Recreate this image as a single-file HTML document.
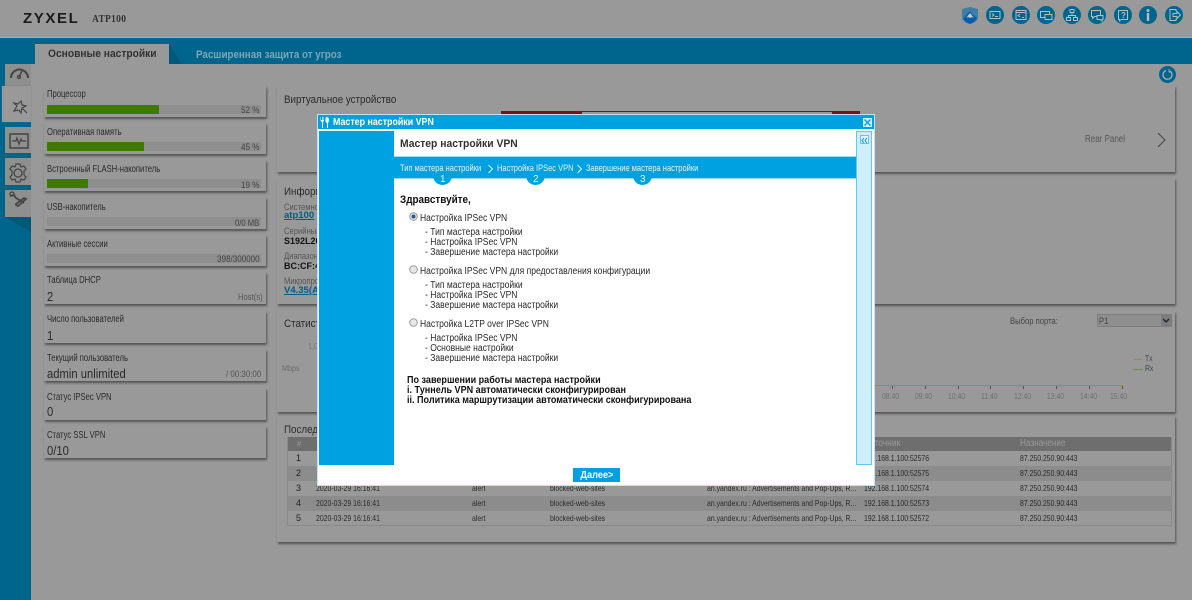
<!DOCTYPE html>
<html><head><meta charset="utf-8"><style>
html,body{margin:0;padding:0}
body{width:1192px;height:600px;position:relative;overflow:hidden;background:#999;font-family:"Liberation Sans",sans-serif;font-size:10px;color:#2a2a2a}
.a,.t,.c{position:absolute}
.t{white-space:nowrap;line-height:12px;transform:scaleX(.85);transform-origin:0 50%}
.l{font-size:10px;transform:scaleX(.765)}
.v{font-size:9.5px;color:#444}
.b{font-size:12.5px;line-height:14px;transform:scaleX(.9)}
.d{font-size:8.5px;transform:scaleX(.81)}
.w{font-size:8px;color:#6f6f6f;top:391px}
.q{font-size:10px;font-weight:bold;color:#111;transform:scaleX(.905)}
.st{font-size:9.5px;color:#e2f5fd;transform:scaleX(.79);top:163px}
.c{left:44px;width:222px;background:#999;box-shadow:1px 2px 2px #555;}
.p{position:absolute;left:277px;width:898px;background:#999;box-shadow:1px 2px 2px #555}
.bar{position:absolute;left:47px;width:214px;height:9px;background:#8e8e8e}
.bar i{display:block;height:9px;background:#3f7a00}
.s{position:absolute;left:5px;width:26px;background:#8f8f8f}
.h{font-size:11px;line-height:14px;color:#2a2a2a;transform:scaleX(.89)}
.ic{position:absolute;top:6px;width:18px;height:18px;border-radius:50%;background:#00658c}
.r{position:absolute;left:288px;width:884px;height:15px}
.m{color:#222;font-size:9px;left:296px;transform:none}
.i{font-size:9px;color:#555;left:284px}
.k{font-size:9px;font-weight:bold;color:#111;left:284px;transform:none}
.n{font-size:10px;transform:scaleX(.855)}
</style></head><body>
<div class="a" style="left:0;top:37px;width:1192px;height:1px;background:#b0aca6"></div>
<div class="a" style="left:0;top:38px;width:1192px;height:26px;background:#00658c"></div>
<div class="a" style="left:0;top:38px;width:31px;height:562px;background:#00658c"></div>
<div class="t" style="left:23px;top:11px;font-size:15px;line-height:16px;font-weight:bold;letter-spacing:1.6px;color:#1a1a1a;transform:none">ZYXEL</div>
<div class="t" style="left:92px;top:14px;font:bold 10px/12px 'Liberation Serif',serif;color:#333;letter-spacing:.3px;transform:scaleX(.95)">ATP100</div>
<!-- top icons -->
<svg class="a" style="left:961px;top:6px" width="18" height="19" viewBox="0 0 18 19"><path d="M1 3L9 1l8 2v8c0 4-4 6-8 7-4-1-8-3-8-7z" fill="#3f7fa3"/><path d="M2 13l4-5 3-3 3 4 4 3-3 4-4 2-4-2z" fill="#0a5bb0"/><path d="M5 12l4-5 4 5-2-1-2 1-2-1z" fill="#c8c8c8"/></svg>
<div class="ic" style="left:986px"><svg width="18" height="18" fill="none" stroke="#bbb"><rect x="4" y="5.5" width="10" height="7"/><path d="M6 7.5l2 1.5-2 1.5M9 10.5h3"/></svg></div>
<div class="ic" style="left:1012px"><svg width="18" height="18" fill="none" stroke="#bbb"><rect x="4" y="4.5" width="10" height="9"/><path d="M4 6.5h10M8 8l-2 1.5L8 11M10 11.5h2"/></svg></div>
<div class="ic" style="left:1037px"><svg width="18" height="18" fill="none" stroke="#bbb"><rect x="3.5" y="5.5" width="9" height="6"/><rect x="8" y="8.5" width="7" height="5" fill="#00658c"/></svg></div>
<div class="ic" style="left:1063px"><svg width="18" height="18" fill="none" stroke="#bbb"><rect x="7" y="3.5" width="4" height="3"/><rect x="3.5" y="11.5" width="4" height="3"/><rect x="10.5" y="11.5" width="4" height="3"/><path d="M9 6.5v3M5.5 11.5v-2h7v2"/></svg></div>
<div class="ic" style="left:1088px"><svg width="18" height="18" fill="none" stroke="#bbb"><path d="M3.5 4.5h9v6h-6l-2 2v-2h-1z"/><path d="M9 9.5h6v4h-1v1.5l-2-1.5H9z" fill="#00658c"/></svg></div>
<div class="ic" style="left:1114px"><svg width="18" height="18" fill="none" stroke="#bbb"><path d="M4.5 4.5h9v9h-6l-2 1.5v-1.500h-1z"/><text x="7" y="12" font-size="8" font-weight="bold" fill="#bbb" stroke="none" font-family="Liberation Sans">?</text></svg></div>
<div class="ic" style="left:1139px"><svg width="18" height="18" fill="#bbb"><circle cx="9" cy="4.5" r="1.5"/><rect x="7.8" y="7" width="2.4" height="8"/></svg></div>
<div class="ic" style="left:1165px"><svg width="18" height="18" fill="none" stroke="#bbb"><path d="M11 5.5V3.5H5v11h6v-2"/><path d="M8 7.5h4V5.500l3.500 3.500-3.500 3.500v-2H8z"/></svg></div>
<!-- tabs -->
<div class="a" style="left:35px;top:44px;width:134px;height:20px;background:#999"></div>
<div class="a" style="left:169px;top:44px;width:13px;height:20px;background:#005878;clip-path:polygon(0 0,100% 100%,0 100%)"></div>
<div class="t" style="left:48px;top:48px;font-size:11px;line-height:13px;font-weight:bold;color:#333;transform:scaleX(.93)">Основные настройки</div>
<div class="t" style="left:196px;top:49px;font-size:11px;line-height:13px;font-weight:bold;color:#7da6b8;transform:scaleX(.89)">Расширенная защита от угроз</div>
<!-- side -->
<div class="s" style="top:64px;height:27px"></div>
<div class="a" style="left:2px;top:86px;width:29px;height:36px;background:#999;box-shadow:0 0 1px #777"></div>
<div class="s" style="top:127px;height:26px"></div>
<div class="s" style="top:158px;height:27px"></div>
<div class="s" style="top:190px;height:27px"></div>
<div class="a" style="left:5px;top:217px;width:26px;height:15px;background:#005878;clip-path:polygon(0 0,100% 0,100% 100%)"></div>
<svg class="a" style="left:0;top:60px" width="32" height="170" fill="none" stroke="#444" stroke-width="1.3">
<path d="M11 18a8.5 8.5 0 1 1 17 0" stroke-width="2"/><path d="M19 17l3-6" stroke-width="1.5"/><circle cx="19" cy="17" r="1.5"/>
<path d="M14 43l3 3-3 5 5-1 2 3 1-5 4-2-4-1-1-4-3 3zM22 48l5 5" stroke-width="1.2"/>
<rect x="10" y="74" width="18" height="14" stroke-width="1.5"/><path d="M12 81h4l1-3 2 6 2-5 1 2h4"/>
<circle cx="18" cy="113" r="4"/><path d="M16 104h4l1 3 3-1 2 3-2 2v4l2 2-2 3-3-1-1 3h-4l-1-3-3 1-2-3 2-2v-4l-2-2 2-3 3 1z" stroke-width="1.2"/>
<path d="M10 136l4-1 2 3 8 5M16 144l8-6 2 1-8 7-2-1z" stroke-width="1.8"/><circle cx="12" cy="134" r="2"/></svg>
<!-- left cards -->
<div class="c" style="top:86px;height:31px"></div><div class="bar" style="top:105px"><i style="width:112px"></i></div>
<div class="t l" style="left:47px;top:89px">Процессор</div><div class="t v" style="left:241px;top:105px">52 %</div>
<div class="c" style="top:123px;height:31px"></div><div class="bar" style="top:142px"><i style="width:97px"></i></div>
<div class="t l" style="left:47px;top:127px">Оперативная память</div><div class="t v" style="left:241px;top:142px">45 %</div>
<div class="c" style="top:160px;height:31px"></div><div class="bar" style="top:179px"><i style="width:41px"></i></div>
<div class="t l" style="left:47px;top:164px">Встроенный FLASH-накопитель</div><div class="t v" style="left:241px;top:180px">19 %</div>
<div class="c" style="top:197px;height:32px"></div><div class="bar" style="top:217px"></div>
<div class="t l" style="left:47px;top:202px">USB-накопитель</div><div class="t v" style="left:235px;top:217px;font-size:9px">0/0 MB</div>
<div class="c" style="top:235px;height:31px"></div><div class="bar" style="top:254px"></div>
<div class="t l" style="left:47px;top:239px">Активные сессии</div><div class="t v" style="left:217px;top:254px">398/300000</div>
<div class="c" style="top:272px;height:32px"></div>
<div class="t l" style="left:47px;top:275px">Таблица DHCP</div><div class="t b" style="left:47px;top:290px">2</div><div class="t" style="left:238px;top:291px;color:#555;font-size:9px">Host(s)</div>
<div class="c" style="top:311px;height:32px"></div>
<div class="t l" style="left:47px;top:314px">Число пользователей</div><div class="t b" style="left:47px;top:329px">1</div>
<div class="c" style="top:349px;height:32px"></div>
<div class="t l" style="left:47px;top:353px">Текущий пользователь</div><div class="t b" style="left:47px;top:367px">admin unlimited</div><div class="t" style="left:226px;top:368px;color:#555;font-size:9px;transform:scaleX(.88)">/ 00:30:00</div>
<div class="c" style="top:388px;height:32px"></div>
<div class="t l" style="left:47px;top:392px">Статус IPSec VPN</div><div class="t b" style="left:47px;top:405px">0</div>
<div class="c" style="top:426px;height:32px"></div>
<div class="t l" style="left:47px;top:430px">Статус SSL VPN</div><div class="t b" style="left:47px;top:444px">0/10</div>
<!-- refresh -->
<div class="a" style="left:1159px;top:66px;width:17px;height:17px;border-radius:50%;background:#00658c"><svg width="17" height="17" fill="none" stroke="#aaa" stroke-width="1.3"><path d="M11 5a4.5 4.5 0 1 1-4-.5"/><path d="M10 3v3h2" stroke-width="1"/></svg></div>
<!-- right panels -->
<div class="p" style="top:86px;height:86px"></div>
<div class="t h" style="left:284px;top:93px">Виртуальное устройство</div>
<div class="a" style="left:501px;top:111px;width:359px;height:1px;background:#333"></div>
<div class="a" style="left:501px;top:111px;width:81px;height:3px;background:#6e1616"></div>
<div class="a" style="left:832px;top:111px;width:28px;height:3px;background:#6e1616"></div>
<div class="t" style="left:1085px;top:134px;font-size:10px;color:#555;transform:scaleX(.8)">Rear Panel</div>
<svg class="a" style="left:1156px;top:131px" width="12" height="18" fill="none" stroke="#444"><path d="M2 2l7 7-7 7"/></svg>
<div class="p" style="top:178px;height:126px"></div>
<div class="t h" style="left:284px;top:185px">Информация</div>
<div class="t i" style="top:201px">Системное имя</div>
<div class="t k" style="top:210px;font-size:9.5px;color:#005f85;text-decoration:underline">atp100</div>
<div class="t i" style="top:225px">Серийный номер</div>
<div class="t k" style="top:235px">S192L20</div>
<div class="t i" style="top:250px">Диапазон</div>
<div class="t k" style="top:260px">BC:CF:4F</div>
<div class="t i" style="top:275px">Микропрограмма</div>
<div class="t k" style="top:285px;font-size:9.5px;color:#005f85;text-decoration:underline">V4.35(AB</div>
<div class="p" style="top:311px;height:101px"></div>
<div class="t h" style="left:284px;top:317px">Статистика</div>
<div class="t" style="left:308px;top:340px;font-size:8.5px;color:#777">1,0</div>
<div class="t" style="left:282px;top:362px;font-size:8.5px;color:#6c6c6c">Mbps</div>
<div class="t" style="left:1010px;top:315px;font-size:9px;color:#444">Выбор порта:</div>
<div class="a" style="left:1097px;top:314px;width:75px;height:13px;background:#8f8f8f;border:1px solid #7d7d7d;box-sizing:border-box"></div>
<div class="t" style="left:1099px;top:315px;font-size:9px;color:#444">P1</div>
<div class="a" style="left:1161px;top:315px;width:10px;height:12px;background:#7d7d7d"><svg width="10" height="12" fill="none" stroke="#123" stroke-width="1.3"><path d="M2 4l3 3 3-3"/></svg></div>
<div class="a" style="left:1133px;top:359px;width:10px;height:1px;background:#a08a50"></div><div class="a" style="left:1133px;top:369px;width:10px;height:1px;background:#6e8a50"></div>
<div class="t" style="left:1145px;top:353px;font-size:8px;color:#444">Tx</div><div class="t" style="left:1145px;top:363px;font-size:8px;color:#444">Rx</div>
<div class="a" style="left:875px;top:385px;width:248px;height:1px;background:#a08a40"></div>
<svg class="a" style="left:875px;top:386px" width="250" height="4" stroke="#555"><path d="M17.5 0v3M50.5 0v3M83.5 0v3M115.5 0v3M148.5 0v3M181.5 0v3M214.5 0v3M247.5 0v3"/></svg>
<div class="t w" style="left:882px">08:40</div><div class="t w" style="left:915px">09:40</div><div class="t w" style="left:948px">10:40</div><div class="t w" style="left:981px">11:40</div><div class="t w" style="left:1014px">12:40</div><div class="t w" style="left:1047px">13:40</div><div class="t w" style="left:1080px">14:40</div><div class="t w" style="left:1110px">15:40</div>
<div class="p" style="top:416px;height:126px"></div>
<div class="t h" style="left:284px;top:423px">Последние</div>
<div class="a" style="left:287px;top:437px;width:885px;height:14px;background:#6e6e6e"></div>
<div class="r" style="top:451px;background:#999"></div><div class="r" style="top:466px;background:#8c8c8c"></div><div class="r" style="top:481px;background:#999"></div><div class="r" style="top:496px;background:#8c8c8c"></div><div class="r" style="top:511px;background:#999"></div>
<div class="a" style="left:287px;top:437px;width:885px;height:89px;border:1px solid #8a8a8a;border-top:0;box-sizing:border-box"></div>
<div class="t" style="left:297px;top:438px;color:#999;font-size:9px">#</div>
<div class="t" style="left:864px;top:438px;color:#999;font-size:10px">Источник</div><div class="t" style="left:1020px;top:438px;color:#999;font-size:10px;transform:scaleX(.82)">Назначение</div>
<div class="t m" style="top:452px">1</div><div class="t m" style="top:467px">2</div><div class="t m" style="top:482px">3</div><div class="t m" style="top:497px">4</div><div class="t m" style="top:512px">5</div>
<div class="t d" style="left:864px;top:452px">192.168.1.100:52576</div><div class="t d" style="left:1020px;top:452px">87.250.250.90:443</div>
<div class="t d" style="left:864px;top:467px">192.168.1.100:52575</div><div class="t d" style="left:1020px;top:467px">87.250.250.90:443</div>
<div class="t d" style="left:316px;top:482px">2020-03-29 16:16:41</div><div class="t d" style="left:472px;top:482px">alert</div><div class="t d" style="left:550px;top:482px">blocked-web-sites</div><div class="t d" style="left:707px;top:482px">an.yandex.ru : Advertisements and Pop-Ups, R...</div><div class="t d" style="left:864px;top:482px">192.168.1.100:52574</div><div class="t d" style="left:1020px;top:482px">87.250.250.90:443</div>
<div class="t d" style="left:316px;top:497px">2020-03-29 16:16:41</div><div class="t d" style="left:472px;top:497px">alert</div><div class="t d" style="left:550px;top:497px">blocked-web-sites</div><div class="t d" style="left:707px;top:497px">an.yandex.ru : Advertisements and Pop-Ups, R...</div><div class="t d" style="left:864px;top:497px">192.168.1.100:52573</div><div class="t d" style="left:1020px;top:497px">87.250.250.90:443</div>
<div class="t d" style="left:316px;top:512px">2020-03-29 16:16:41</div><div class="t d" style="left:472px;top:512px">alert</div><div class="t d" style="left:550px;top:512px">blocked-web-sites</div><div class="t d" style="left:707px;top:512px">an.yandex.ru : Advertisements and Pop-Ups, R...</div><div class="t d" style="left:864px;top:512px">192.168.1.100:52572</div><div class="t d" style="left:1020px;top:512px">87.250.250.90:443</div>
<!-- modal -->
<div class="a" style="left:317px;top:114px;width:558px;height:372px;background:#fff;border:1px solid #bfe3f5;box-sizing:border-box"></div>
<div class="a" style="left:318px;top:115px;width:556px;height:14px;background:#00a1e0"></div>
<svg class="a" style="left:320px;top:117px" width="10" height="11" fill="#fff"><path d="M1 0v3h1V0h.6v3h1V0H4v4L3 5v6H2V5L.6 4V0zM6 0c2 0 3 1 3 3S8 6 8 6v5H7V6C6 6 5.5 5 5.5 3S6 0 6 0z"/></svg>
<div class="t" style="left:333px;top:117px;font-size:10px;font-weight:bold;color:#fff;transform:scaleX(.886)">Мастер настройки VPN</div>
<div class="a" style="left:863px;top:118px;width:9px;height:9px;background:#d4edf8"><svg width="9" height="9" stroke="#00a1e0" stroke-width="1.3"><path d="M1.5 1.5l6 6M7.5 1.5l-6 6"/></svg></div>
<div class="a" style="left:319px;top:131px;width:75px;height:334px;background:#00a1e0"></div>
<div class="t" style="left:400px;top:138px;font-size:11px;line-height:13px;font-weight:bold;color:#333;transform:scaleX(.94)">Мастер настройки VPN</div>
<div class="a" style="left:394px;top:156px;width:462px;height:23px;background:#00a1e0;border-top:1px solid #9adcf6;border-bottom:1px solid #9adcf6;box-sizing:border-box"></div>
<div class="a" style="left:433px;top:168px;width:19px;height:17px;border-radius:0 0 10px 10px;background:#00a1e0"></div>
<div class="a" style="left:526px;top:168px;width:19px;height:17px;border-radius:0 0 10px 10px;background:#00a1e0"></div>
<div class="a" style="left:633px;top:168px;width:19px;height:17px;border-radius:0 0 10px 10px;background:#00a1e0"></div>
<div class="t st" style="left:400px">Тип мастера настройки</div>
<div class="t st" style="left:497px">Настройка IPSec VPN</div>
<div class="t st" style="left:586px">Завершение мастера настройки</div>
<svg class="a" style="left:486px;top:164px" width="100" height="10" fill="none" stroke="#e2f5fd"><path d="M2.5 1l4 4-4 4M91.5 1l4 4-4 4"/></svg>
<div class="t" style="left:440px;top:174px;font-size:10px;color:#e8f8ff;transform:none">1</div><div class="t" style="left:533px;top:174px;font-size:10px;color:#e8f8ff;transform:none">2</div><div class="t" style="left:640px;top:174px;font-size:10px;color:#e8f8ff;transform:none">3</div>
<div class="t" style="left:400px;top:194px;font-size:11px;line-height:13px;font-weight:bold;color:#111;transform:scaleX(.9)">Здравствуйте,</div>
<svg class="a" style="left:409px;top:212px" width="9" height="118"><g fill="#e8e8e8" stroke="#999"><circle cx="4.5" cy="4.5" r="3.8"/><circle cx="4.5" cy="57.5" r="3.8"/><circle cx="4.5" cy="110.5" r="3.8"/></g><circle cx="4.5" cy="4.5" r="2" fill="#1a5e9a"/></svg>
<div class="t n" style="left:420px;top:213px">Настройка IPSec VPN</div>
<div class="t n" style="left:425px;top:227px">- Тип мастера настройки</div><div class="t n" style="left:425px;top:237px">- Настройка IPSec VPN</div><div class="t n" style="left:425px;top:247px">- Завершение мастера настройки</div>
<div class="t n" style="left:420px;top:266px">Настройка IPSec VPN для предоставления конфигурации</div>
<div class="t n" style="left:425px;top:280px">- Тип мастера настройки</div><div class="t n" style="left:425px;top:290px">- Настройка IPSec VPN</div><div class="t n" style="left:425px;top:300px">- Завершение мастера настройки</div>
<div class="t n" style="left:420px;top:319px">Настройка L2TP over IPSec VPN</div>
<div class="t n" style="left:425px;top:333px">- Настройка IPSec VPN</div><div class="t n" style="left:425px;top:343px">- Основные настройки</div><div class="t n" style="left:425px;top:353px">- Завершение мастера настройки</div>
<div class="t q" style="left:407px;top:375px">По завершении работы мастера настройки</div>
<div class="t q" style="left:407px;top:385px">i. Туннель VPN автоматически сконфигурирован</div>
<div class="t q" style="left:407px;top:395px">ii. Политика маршрутизации автоматически сконфигурирована</div>
<div class="a" style="left:856px;top:131px;width:16px;height:334px;background:#cdeefa;border:1px solid #5cc8f5;box-sizing:border-box"></div>
<div class="a" style="left:860px;top:135px;width:9px;height:9px;background:#e6f6fc;border:1px solid #5cc8f5;box-sizing:border-box"><svg width="7" height="7" fill="none" stroke="#0090d0"><path d="M3 1L1 3.5 3 6M6 1L4 3.5 6 6"/></svg></div>
<div class="a" style="left:573px;top:468px;width:47px;height:14px;background:#00a1e0;color:#fff;font-size:10px;font-weight:bold;line-height:15px;text-align:center"><span style="display:inline-block;transform:scaleX(.92)">Далее&gt;</span></div>
</body></html>
